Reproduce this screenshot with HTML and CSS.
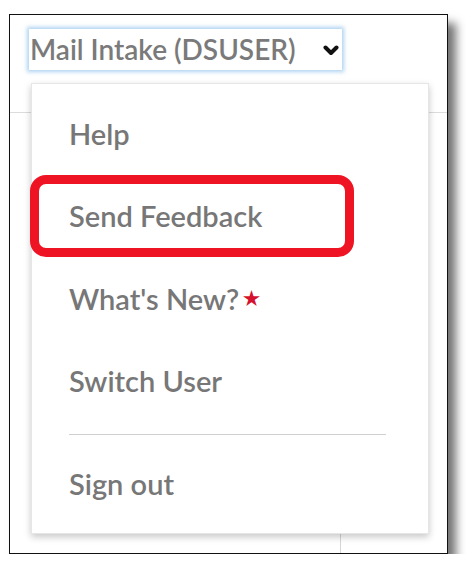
FILE: index.html
```html
<!DOCTYPE html>
<html>
<head>
<meta charset="utf-8">
<link rel="stylesheet" href="styles.css">
</head>
<body>
<div class="frame">
  <div class="toolbar">
    <div class="user-select">
      <span class="user-name">Mail Intake (DSUSER)</span>
      <svg class="chevron" width="16" height="11" viewBox="0 0 16 11"><path d="M2.5 2.5 L8 8 L13.5 2.5" fill="none" stroke="#111" stroke-width="4" stroke-linecap="round" stroke-linejoin="round"/></svg>
    </div>
  </div>
  <div class="content">
    <div class="col-main"></div>
    <div class="col-side"></div>
  </div>
  <div class="menu">
    <div class="item">Help</div>
    <div class="item highlight">Send Feedback</div>
    <div class="item">What's New?<span class="star">★</span></div>
    <div class="item">Switch User</div>
    <div class="divider"></div>
    <div class="item">Sign out</div>
  </div>
</div>
</body>
</html>
```

FILE: styles.css
```css
html, body {
  margin: 0;
  padding: 0;
  background: #ffffff;
}
body {
  font-family: "Lato", "Open Sans", sans-serif;
  color: #707070;
}
.frame {
  position: relative;
  margin: 14px 0 0 9px;
  width: 439px;
  height: 540px;
  box-sizing: border-box;
  border: 1px solid #111;
  background: #fff;
  box-shadow: 8px 9px 9px rgba(0, 0, 0, 0.55);
  display: flex;
  flex-direction: column;
}
.toolbar {
  height: 98px;
  box-sizing: border-box;
  border-bottom: 1px solid #dcdcdc;
  padding: 14px 0 0 19px;
}
.user-select {
  display: flex;
  align-items: center;
  width: 313px;
  height: 41px;
  box-sizing: border-box;
  padding: 0 3px 0 1px;
  background: #fff;
  box-shadow: 0 0 4px 2px rgba(110, 175, 230, 0.55);
}
.user-name {
  flex: 1;
  font-size: 28px;
  font-weight: 600;
  line-height: 41px;
  color: #7a7a7a;
  white-space: nowrap;
}
.chevron {
  display: block;
  margin-top: 2px;
}
.content {
  flex: 1;
  display: flex;
}
.col-main {
  width: 330px;
  border-right: 1px solid #d6d6d6;
}
.col-side {
  flex: 1;
}
.menu {
  position: absolute;
  left: 21px;
  top: 68px;
  width: 398px;
  height: 451px;
  box-sizing: border-box;
  padding: 9px 0 10px;
  background: #fff;
  border: 1px solid #e6e6e6;
  box-shadow: 0 3px 7px rgba(0, 0, 0, 0.22);
  display: flex;
  flex-direction: column;
}
.item {
  flex: none;
  font-size: 29px;
  font-weight: 600;
  line-height: 40px;
  padding: 21px 37px;
  color: #777777;
  white-space: nowrap;
}
.item.highlight {
  width: 324px;
  box-sizing: border-box;
  margin-left: -2px;
  padding: 12px 30px;
  border: 9px solid #ee1424;
  border-radius: 16px;
}
.star {
  color: #d6112d;
  font-size: 19px;
  margin-left: 4px;
  vertical-align: 5px;
}
.divider {
  flex: none;
  height: 1px;
  margin: 12px 42px 8px 37px;
  background: #cfcfcf;
}
```
